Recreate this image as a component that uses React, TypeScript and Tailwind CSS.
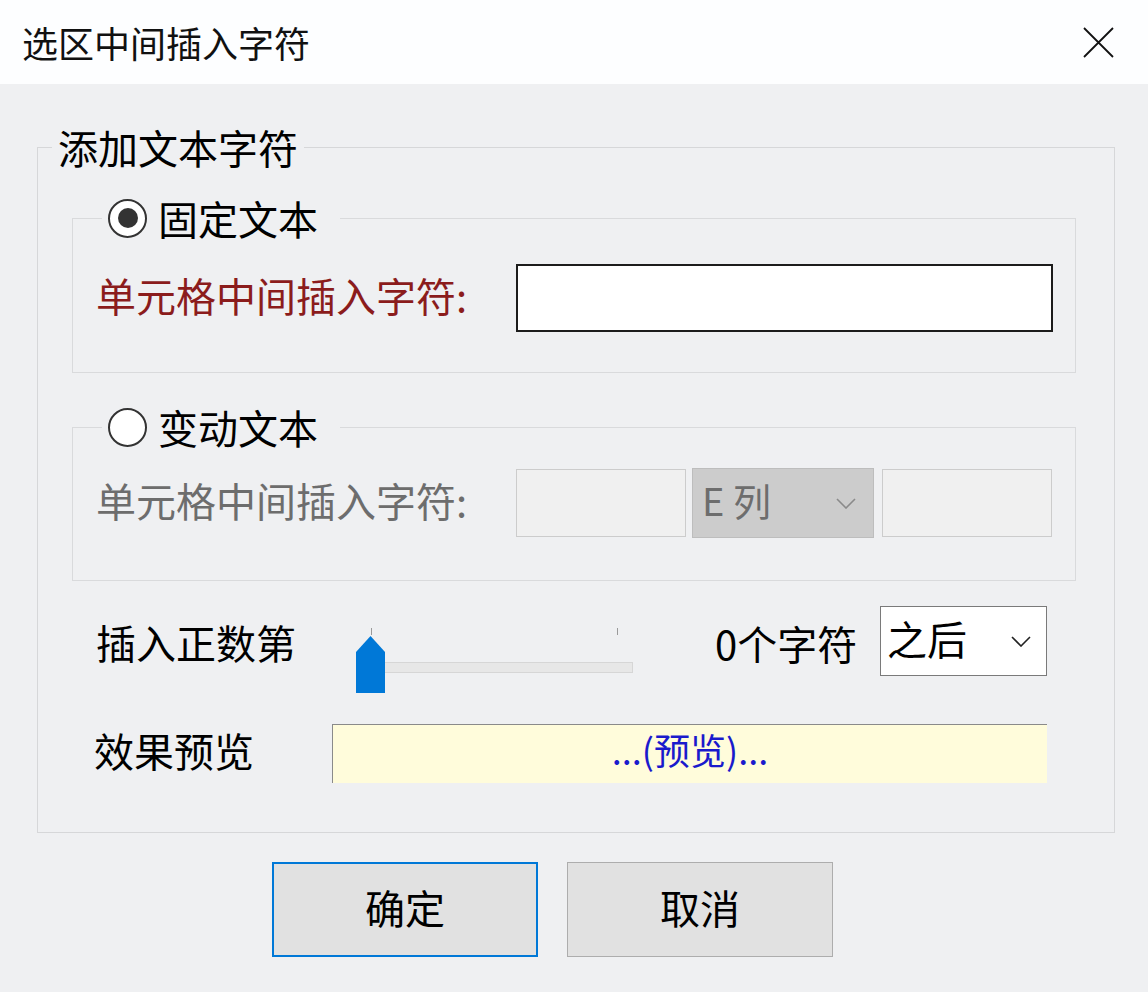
import React from 'react';

function Radio({ checked }: { checked: boolean }) {
  return (
    <span className="w-[39px] h-[39px] rounded-full border-2 border-[#333333] bg-white flex items-center justify-center shrink-0">
      {checked && <span className="w-[20px] h-[20px] rounded-full bg-[#333333]"></span>}
    </span>
  );
}

function Chevron({ color }: { color: string }) {
  return (
    <svg width="20" height="11" viewBox="0 0 20 11" fill="none">
      <path d="M1 1 L10 10 L19 1" stroke={color} strokeWidth="1.6" />
    </svg>
  );
}

export default function App() {
  return (
    <div className="min-h-screen w-[1148px] bg-[#eff0f2] text-black font-['Noto_Sans_CJK_SC','Microsoft_YaHei',sans-serif]">
      {/* Title bar */}
      <div className="h-[84px] bg-[#fdfeff] flex items-center justify-between pl-[22px] pr-[34px]">
        <span className="text-[36px] leading-[44px] text-[#111111]">选区中间插入字符</span>
        <svg width="31" height="31" viewBox="0 0 31 31" fill="none">
          <path d="M1 1 L30 30 M30 1 L1 30" stroke="#111111" strokeWidth="1.8" />
        </svg>
      </div>

      {/* Body */}
      <div className="pt-[39px]">
        <fieldset className="ml-[37px] w-[1078px] border border-[#d6d7d9]">
          <legend className="ml-[14px] px-[6px] text-[40px] leading-[48px]">添加文本字符</legend>
          <div className="pt-[23px] pl-[34px] pb-[49px]">
            {/* Fixed text */}
            <fieldset className="w-[1004px] border border-[#d9dadc]">
              <legend className="ml-[29px] pl-[6px] pr-[22px] h-[48px]">
                <span className="flex items-center h-[48px] gap-[11px]">
                  <Radio checked={true} />
                  <span className="text-[40px] leading-[48px]">固定文本</span>
                </span>
              </legend>
              <div className="pt-[22px] pb-[40px] pl-[23px] flex items-center">
                <span className="relative -top-[3px] w-[420px] text-[40px] leading-[48px] text-[#8b1c1c]">单元格中间插入字符:</span>
                <div className="w-[537px] h-[68px] bg-white border-2 border-[#1c1c1c]"></div>
              </div>
            </fieldset>

            {/* Variable text */}
            <fieldset className="mt-[30px] w-[1004px] border border-[#d9dadc]">
              <legend className="ml-[29px] pl-[6px] pr-[22px] h-[48px]">
                <span className="flex items-center h-[48px] gap-[11px]">
                  <Radio checked={false} />
                  <span className="text-[40px] leading-[48px]">变动文本</span>
                </span>
              </legend>
              <div className="pt-[17px] pb-[42px] pl-[23px] flex items-center h-[129px]">
                <span className="relative -top-[3px] w-[420px] text-[40px] leading-[48px] text-[#6d6d6d]">单元格中间插入字符:</span>
                <div className="w-[170px] h-[68px] bg-[#f0f0f0] border border-[#cccccc]"></div>
                <div className="ml-[6px] w-[182px] h-[70px] bg-[#cccccc] border border-[#bdbdbd] flex items-center justify-between pl-[9px] pr-[17px]">
                  <span className="relative -top-[3px] text-[38px] leading-[48px] text-[#6d6d6d]">E 列</span>
                  <Chevron color="#8a8a8a" />
                </div>
                <div className="ml-[8px] w-[170px] h-[68px] bg-[#f0f0f0] border border-[#cccccc]"></div>
              </div>
            </fieldset>

            {/* Position row */}
            <div className="mt-[25px] pl-[24px] flex items-start h-[88px]">
              <span className="mt-[12px] w-[260px] text-[40px] leading-[48px]">插入正数第</span>
              <div className="relative w-[277px] h-[88px]">
                <div className="absolute left-[15px] top-[22px] w-px h-[7px] bg-[#9a9a9a]"></div>
                <div className="absolute left-[261px] top-[22px] w-px h-[7px] bg-[#9a9a9a]"></div>
                <div className="absolute left-0 right-0 top-[56px] h-[11px] bg-[#e7e7e7] border border-[#d6d6d6]"></div>
                <svg className="absolute left-0 top-[30px]" width="29" height="57" viewBox="0 0 29 57">
                  <polygon points="0,16 14.5,0 29,16 29,57 0,57" fill="#0078d7" />
                </svg>
              </div>
              <span className="mt-[13px] ml-[82px] w-[165px] text-[40px] leading-[48px]">0个字符</span>
              <div className="w-[167px] h-[70px] bg-white border border-[#7a7a7a] flex items-center justify-between pl-[6px] pr-[15px]">
                <span className="relative -top-[3px] text-[40px] leading-[48px]">之后</span>
                <Chevron color="#222222" />
              </div>
            </div>

            {/* Preview row */}
            <div className="mt-[30px] pl-[22px] flex items-center">
              <span className="relative -top-[4px] w-[238px] text-[40px] leading-[48px]">效果预览</span>
              <div className="w-[715px] h-[59px] bg-[#fffcdb] border-t border-l border-[#8a8a8a] flex items-center justify-center">
                <span className="relative -top-[5px] text-[36px] leading-[44px] text-[#1a1acc]">...(预览)...</span>
              </div>
            </div>
          </div>
        </fieldset>

        {/* Buttons */}
        <div className="mt-[29px] pl-[272px] flex gap-[29px]">
          <button className="w-[266px] h-[95px] bg-[#e1e1e1] border-2 border-[#0078d7] text-[40px] leading-[48px]">
            <span className="relative -top-[3px]">确定</span>
          </button>
          <button className="w-[266px] h-[95px] bg-[#e1e1e1] border border-[#adadad] text-[40px] leading-[48px]">
            <span className="relative -top-[3px]">取消</span>
          </button>
        </div>
      </div>
    </div>
  );
}
